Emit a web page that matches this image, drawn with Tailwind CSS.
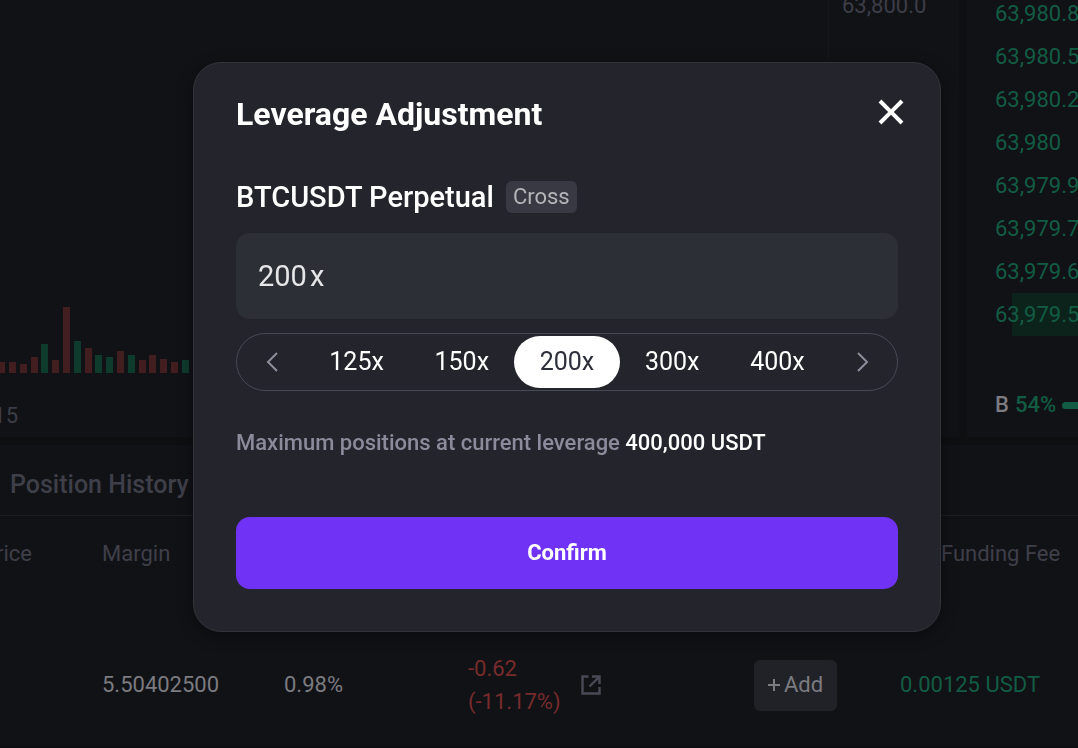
<!DOCTYPE html>
<html lang="en">
<head>
    <meta charset="UTF-8">
    <meta name="viewport" content="width=device-width, initial-scale=1.0">
    <title>BTCUSDT Perpetual</title>
    <!-- Tailwind CSS for styling -->
    <script src="https://cdn.jsdelivr.net/npm/@tailwindcss/browser@4"></script>
</head>
<body class="bg-[#0e0f11] font-[Roboto,sans-serif] text-[22px] leading-8 text-[#7b7b80] antialiased overflow-hidden">

    <!-- Trading page -->
    <div class="flex flex-col gap-2 min-h-screen">

        <div class="flex gap-2 h-[437px]">
            <!-- Chart -->
            <section class="flex flex-1 bg-[#111216] overflow-hidden text-[#3d3d48]">
                <div class="flex flex-1 flex-col justify-end pb-[5px]">
                    <svg class="w-[200px] h-[70px]" viewBox="0 0 200 70" shape-rendering="crispEdges">
                        <g fill="#431e21">
                            <rect x="-2" y="59" width="7" height="11"/>
                            <rect x="9" y="59" width="7" height="11"/>
                            <rect x="20" y="61" width="7" height="9"/>
                            <rect x="31" y="54" width="7" height="16"/>
                            <rect x="52" y="57" width="7" height="13"/>
                            <rect x="63" y="4" width="7" height="66"/>
                            <rect x="85" y="45" width="7" height="25"/>
                            <rect x="117" y="48" width="7" height="22"/>
                            <rect x="139" y="57" width="7" height="13"/>
                            <rect x="149" y="52" width="7" height="18"/>
                            <rect x="160" y="56" width="7" height="14"/>
                            <rect x="171" y="59" width="7" height="11"/>
                        </g>
                        <g fill="#0f3b2d">
                            <rect x="41" y="41" width="7" height="29"/>
                            <rect x="74" y="38" width="7" height="32"/>
                            <rect x="95" y="52" width="7" height="18"/>
                            <rect x="106" y="54" width="7" height="16"/>
                            <rect x="128" y="52" width="7" height="18"/>
                            <rect x="182" y="57" width="7" height="13"/>
                        </g>
                    </svg>
                    <div class="flex justify-end w-[18px] mt-[27px]">15</div>
                </div>
                <div class="w-[131px] pl-[13px] border-l border-dotted border-[#1b1c20]">
                    <div class="-mt-2.5">63,800.0</div>
                </div>
            </section>

            <!-- Order book -->
            <section class="flex flex-col w-[111px] bg-[#111216] overflow-hidden text-[#125c43]">
                <ul class="-mt-2 leading-[43px]">
                    <li class="pl-7">63,980.8</li>
                    <li class="pl-7">63,980.5</li>
                    <li class="pl-7">63,980.2</li>
                    <li class="pl-7">63,980</li>
                    <li class="pl-7">63,979.9</li>
                    <li class="pl-7">63,979.7</li>
                    <li class="pl-7">63,979.6</li>
                    <li class="pl-7 bg-linear-to-r from-transparent from-[45px] to-[#0c231c] to-[45px]">63,979.5</li>
                </ul>
                <div class="flex items-center gap-1.5 mt-[53px] pl-7 font-medium">
                    <span class="text-[#7b7b80]">B</span>
                    <span>54%</span>
                    <span class="w-10 h-[7px] shrink-0 rounded-full bg-[#125c43]"></span>
                </div>
            </section>
        </div>

        <!-- Positions -->
        <section class="bg-[#111216] h-[301px] text-[#3f3f4a]">
            <div class="flex items-center h-[71px] pl-2.5 pt-2.5 border-b border-[#1c1d22]">
                <a href="#" class="text-[25px] font-medium">Position History</a>
            </div>
            <table class="w-full table-fixed text-left whitespace-nowrap">
                <colgroup>
                    <col class="w-[102px]">
                    <col class="w-[182px]">
                    <col class="w-[184px]">
                    <col class="w-[286px]">
                    <col class="w-[146px]">
                    <col>
                </colgroup>
                <thead>
                    <tr class="h-[76px]">
                        <th class="font-normal"><div class="flex justify-end w-8">Price</div></th>
                        <th class="font-normal">Margin</th>
                        <th></th>
                        <th></th>
                        <th></th>
                        <th class="pl-[41px] font-normal">Funding Fee</th>
                    </tr>
                </thead>
                <tbody>
                    <tr class="h-[186px] text-[#7b7b80]">
                        <td></td>
                        <td>5.50402500</td>
                        <td>0.98%</td>
                        <td>
                            <div class="flex items-center gap-5 leading-[33px] text-[#772b2c]">
                                <div>-0.62<br>(-11.17%)</div>
                                <button aria-label="Share position" class="text-[#4a4a57]">
                                    <svg class="size-5" viewBox="0 0 20 20" fill="none" stroke="currentColor" stroke-width="2.400">
                                        <path d="M7.500 1.500h-6v17h17V12M11 1.500h7.500V9M18 2 8.500 11.500"/>
                                    </svg>
                                </button>
                            </div>
                        </td>
                        <td>
                            <button class="flex items-center gap-1 h-[51px] px-3.5 rounded-md bg-[#212228]">
                                <svg class="size-3" viewBox="0 0 12 12" stroke="currentColor" stroke-width="2"><path d="M6 0v12M0 6h12"/></svg>
                                Add
                            </button>
                        </td>
                        <td class="text-[#125c43]">0.00125 USDT</td>
                    </tr>
                </tbody>
            </table>
        </section>
    </div>

    <!-- Leverage modal -->
    <div class="fixed inset-0 flex items-start justify-center pt-[62px] pl-14">
        <div role="dialog" aria-labelledby="modal-title" class="w-full max-w-[748px] px-[42px] pt-7 pb-[42px] rounded-[28px] border border-[#33343b] bg-[#24242d] text-white shadow-[0_4px_16px_rgba(0,0,0,0.4)]">
            <div class="flex items-center justify-between h-[46px]">
                <h2 id="modal-title" class="text-[32px] font-bold">Leverage Adjustment</h2>
                <button aria-label="Close" class="-mr-1.5 -mt-1">
                    <svg class="size-[26px]" viewBox="0 0 26 26" stroke="currentColor" stroke-width="4"><path d="M2 2l22 22M24 2 2 24"/></svg>
                </button>
            </div>

            <div class="flex items-center gap-3 mt-[43px] h-[33px]">
                <label for="leverage" class="text-[29px] font-medium">BTCUSDT Perpetual</label>
                <span class="px-[7px] rounded-md bg-[#383943] leading-8 text-[#b4b4b9]">Cross</span>
            </div>

            <div class="flex items-center gap-1 h-[86px] mt-5 px-[22px] rounded-[14px] bg-[#2d2f37] text-[29px] text-[#e6e6e8]">
                <input id="leverage" type="text" value="200" class="w-12 bg-transparent outline-none">
                <span>x</span>
            </div>

            <div class="flex items-center mt-3.5 h-[58px] p-0.5 rounded-full border border-[#484955] text-[25px]">
                <button aria-label="Lower leverage" class="flex justify-center w-[65px] text-[#8d8d9b]">
                    <svg class="w-3 h-5" viewBox="0 0 12 20" fill="none" stroke="currentColor" stroke-width="2"><path d="M11 1 2 10l9 9"/></svg>
                </button>
                <button class="flex-1 h-full rounded-full">125x</button>
                <button class="flex-1 h-full rounded-full">150x</button>
                <button class="flex-1 h-full rounded-full bg-white text-[#2d2f3b]">200x</button>
                <button class="flex-1 h-full rounded-full">300x</button>
                <button class="flex-1 h-full rounded-full">400x</button>
                <button aria-label="Higher leverage" class="flex justify-center w-[65px] text-[#8d8d9b]">
                    <svg class="w-3 h-5" viewBox="0 0 12 20" fill="none" stroke="currentColor" stroke-width="2"><path d="m1 1 9 9-9 9"/></svg>
                </button>
            </div>

            <p class="mt-9 font-medium text-[#8b8b9c]">Maximum positions at current leverage <span class="text-white">400,000 USDT</span></p>

            <button class="w-full h-[72px] mt-[58px] rounded-[14px] bg-[#7033f5] font-bold">Confirm</button>
        </div>
    </div>

</body>
</html>
